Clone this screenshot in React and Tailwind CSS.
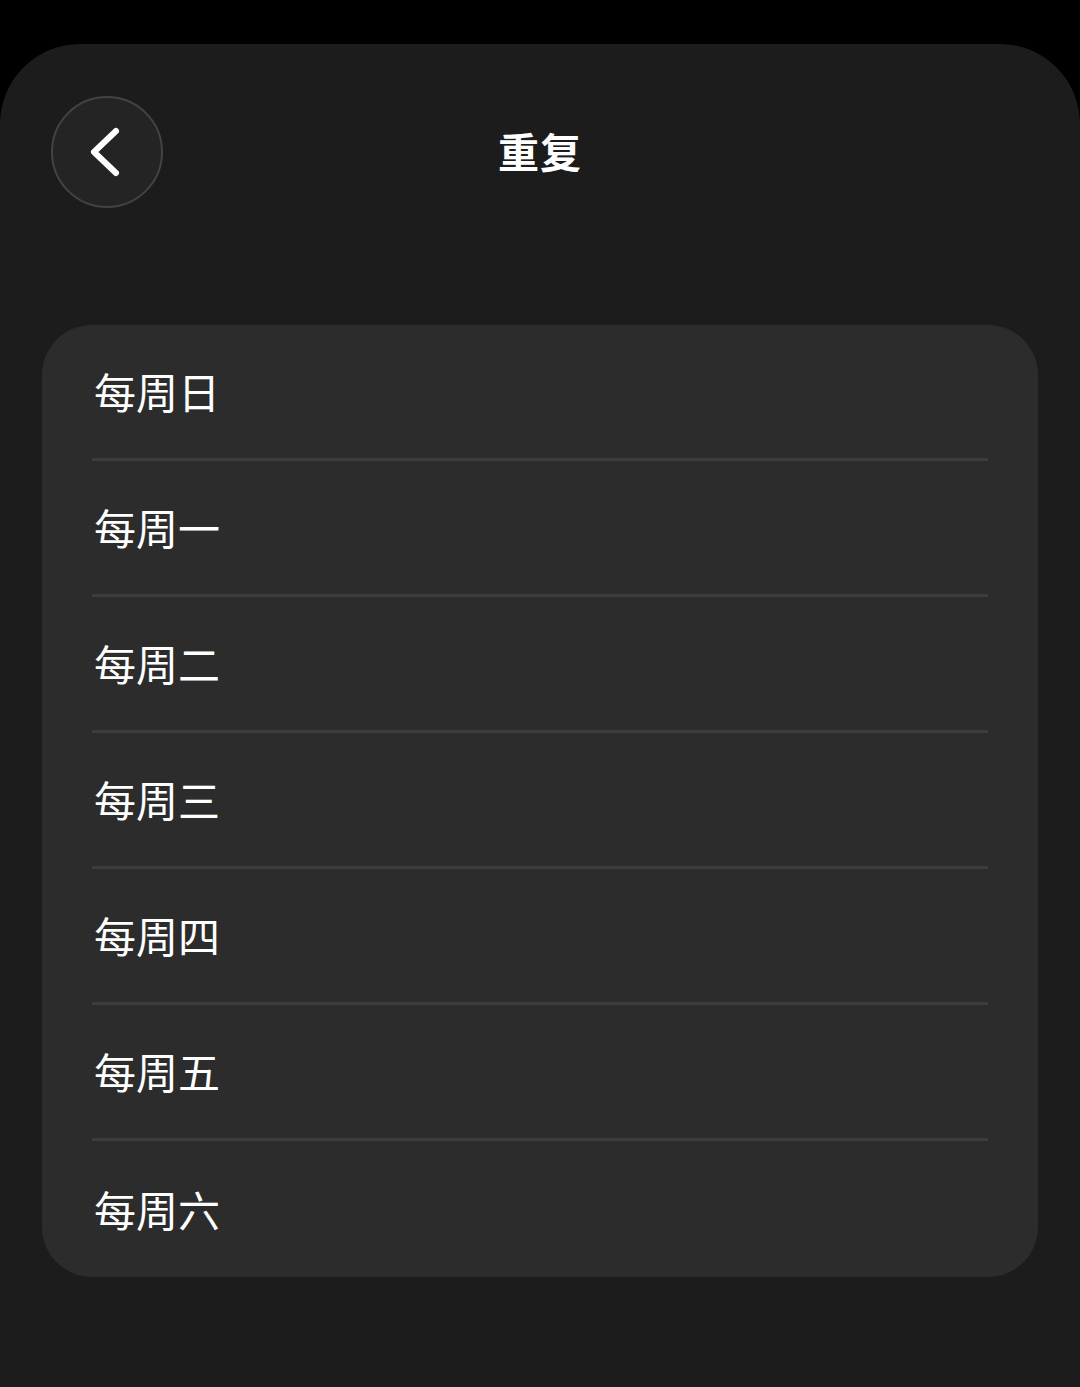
import React from "react";

const days = ["每周日", "每周一", "每周二", "每周三", "每周四", "每周五", "每周六"];

const font = { fontFamily: '"Noto Sans CJK SC", "Noto Sans", sans-serif' };

export default function App() {
  return (
    <div className="w-[1080px] h-[1387px] bg-black pt-[44px]" style={font}>
      <div className="h-full bg-[#1c1c1c] rounded-t-[80px] px-[42px]">
        {/* Header */}
        <div className="relative h-[216px] flex items-center justify-center">
          <button className="absolute left-[9px] top-[52px] w-[112px] h-[112px] rounded-full bg-[#242424] border-2 border-[#434343] flex items-center justify-center">
            <svg width="40" height="56" viewBox="0 0 40 56">
              <path
                d="M28 9 L6 30 L28 51"
                fill="none"
                stroke="white"
                strokeWidth="6"
                strokeLinecap="round"
                strokeLinejoin="round"
                transform="translate(1 -2)"
              />
            </svg>
          </button>
          <h1 className="text-white text-[41px] font-bold -mt-[2px] tracking-[1px]">重复</h1>
        </div>

        {/* List */}
        <div className="mt-[65px] bg-[#2c2c2c] rounded-[50px] px-[50px]">
          {days.map((d, i) => (
            <div
              key={d}
              className={`h-[136px] flex items-center ${
                i < days.length - 1 ? "border-b-[3px] border-[#3c3c3c]" : ""
              }`}
            >
              <span className="text-white text-[42px] pl-[2px] -mt-[2px]">{d}</span>
            </div>
          ))}
        </div>
      </div>
    </div>
  );
}
